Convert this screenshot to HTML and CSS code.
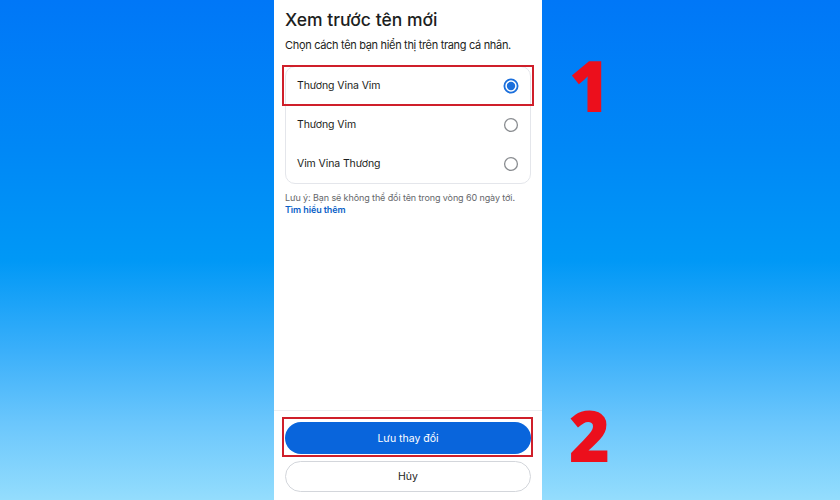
FILE: index.html
```html
<!DOCTYPE html>
<html lang="vi">
<head>
<meta charset="utf-8">
<title>Xem trước tên mới</title>
<link rel="stylesheet" href="styles.css">
</head>
<body>
<div class="page">
  <div class="side"></div>
  <main class="panel">
    <h1 class="title">Xem trước tên mới</h1>
    <p class="subtitle">Chọn cách tên bạn hiển thị trên trang cá nhân.</p>
    <div class="card">
      <div class="row row-marked">
        <span class="label">Thương Vina Vim</span>
        <svg class="radio" width="16" height="16" viewBox="0 0 16 16"><circle cx="8" cy="8" r="6.6" fill="none" stroke="#1b6fdc" stroke-width="1.8"/><circle cx="8" cy="8" r="4.2" fill="#1b6fdc"/></svg>
      </div>
      <div class="row">
        <span class="label">Thương Vim</span>
        <svg class="radio" width="16" height="16" viewBox="0 0 16 16"><circle cx="8" cy="8" r="6.4" fill="none" stroke="#8a8d91" stroke-width="1.3"/></svg>
      </div>
      <div class="row">
        <span class="label">Vim Vina Thương</span>
        <svg class="radio" width="16" height="16" viewBox="0 0 16 16"><circle cx="8" cy="8" r="6.4" fill="none" stroke="#8a8d91" stroke-width="1.3"/></svg>
      </div>
    </div>
    <p class="note">Lưu ý: Bạn sẽ không thể đổi tên trong vòng 60 ngày tới.<br><a class="link" href="#">Tìm hiểu thêm</a></p>
    <div class="spacer"></div>
    <div class="footer">
      <button class="btn btn-primary btn-marked">Lưu thay đổi</button>
      <button class="btn btn-secondary">Hủy</button>
    </div>
  </main>
  <aside class="marks">
    <span class="num num-1">1</span>
    <span class="num num-2">2</span>
  </aside>
</div>
</body>
</html>
```
FILE: styles.css
```css
html, body {
  margin: 0;
  padding: 0;
}
body {
  width: 840px;
  height: 500px;
  overflow: hidden;
  font-family: Inter, Roboto, "Noto Sans", sans-serif;
  background: linear-gradient(to bottom, #0077f7 0%, #0088f6 30%, #0098f6 52%, #3aaffa 70%, #6cc7fc 85%, #94ddfd 100%);
}
.page {
  display: grid;
  grid-template-columns: 274px 268px 1fr;
  height: 500px;
}
.panel {
  background: #ffffff;
  display: flex;
  flex-direction: column;
  height: 500px;
  box-sizing: border-box;
  padding-top: 8px;
}
.title {
  margin: 0 11px;
  font-size: 17.5px;
  line-height: 24px;
  font-weight: 500;
  color: #1c1e21;
}
.subtitle {
  margin: 5px 11px 0;
  font-size: 11px;
  line-height: 16px;
  color: #1c1e21;
  letter-spacing: -0.32px;
}
.card {
  margin: 13px 11px 0;
  border: 1px solid #e4e6eb;
  border-radius: 10px;
  display: flex;
  flex-direction: column;
}
.row {
  position: relative;
  height: 39px;
  display: flex;
  align-items: center;
  justify-content: space-between;
  padding: 0 11px 0 11px;
}
.row:first-child {
  margin-top: -1px;
}
.row-marked::after {
  content: "";
  position: absolute;
  top: -1px;
  bottom: -1px;
  left: -4px;
  right: -4px;
  border: 2px solid #cf1f2a;
}
.label {
  font-size: 10.5px;
  color: #1c1e21;
  letter-spacing: -0.1px;
}
.radio {
  display: block;
}
.note {
  margin: 8px 11px 0;
  font-size: 9px;
  line-height: 12px;
  color: #65676b;
  letter-spacing: -0.1px;
}
.link {
  color: #0a5fc7;
  font-weight: 600;
  text-decoration: none;
}
.spacer {
  flex: 1;
}
.footer {
  border-top: 1px solid #eceef1;
  padding: 11px 11px 8px;
  display: flex;
  flex-direction: column;
  gap: 7px;
}
.btn {
  font-family: inherit;
  font-size: 10.5px;
  border-radius: 16px;
  cursor: pointer;
  width: 100%;
}
.btn-primary {
  height: 32px;
  background: #0965dc;
  border: none;
  color: #ffffff;
  position: relative;
}
.btn-marked::after {
  content: "";
  position: absolute;
  top: -5px;
  bottom: -3px;
  left: -3px;
  right: -2px;
  border: 2px solid #cf1f2a;
}
.btn-secondary {
  height: 31px;
  background: #ffffff;
  border: 1px solid #d3d6db;
  color: #1c1e21;
}
.marks {
  display: flex;
  flex-direction: column;
  padding-left: 27px;
}
.num {
  font-family: "Open Sans", "Liberation Sans", sans-serif;
  font-weight: 800;
  font-size: 70px;
  line-height: 70px;
  color: #ec0f1c;
}
.num-1 {
  margin-top: 50px;
}
.num-2 {
  margin-top: 280px;
}
```
